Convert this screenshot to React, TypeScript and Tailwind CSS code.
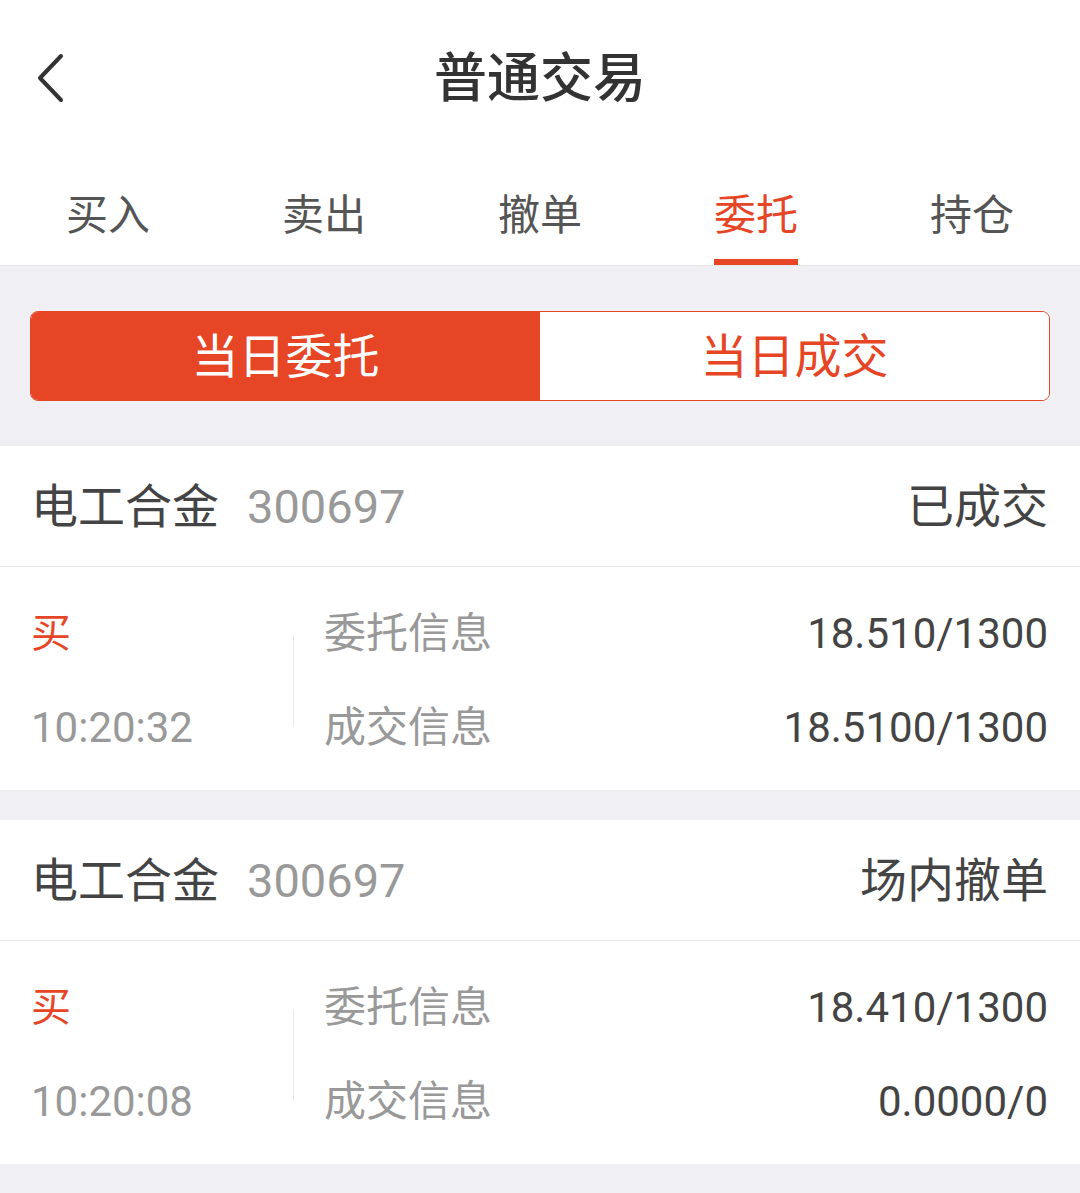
import { useState } from "react";

const FONT = "font-['Roboto','Noto_Sans_CJK_SC',sans-serif]";

interface Order {
  name: string;
  code: string;
  status: string;
  side: string;
  time: string;
  entrust: string;
  deal: string;
}

const orders: Order[] = [
  { name: "电工合金", code: "300697", status: "已成交", side: "买", time: "10:20:32", entrust: "18.510/1300", deal: "18.5100/1300" },
  { name: "电工合金", code: "300697", status: "场内撤单", side: "买", time: "10:20:08", entrust: "18.410/1300", deal: "0.0000/0" },
];

const tabs = ["买入", "卖出", "撤单", "委托", "持仓"];

export default function App() {
  const [tab, setTab] = useState(3);
  const [seg, setSeg] = useState(0);

  return (
    <div className={`w-[1080px] min-h-[1193px] bg-[#efeff4] ${FONT}`}>
      {/* Header */}
      <div className="relative h-[152px] bg-white flex items-center justify-center">
        <button className="absolute left-[30px] top-[50px] w-[40px] h-[56px] flex items-center justify-center">
          <svg width="30" height="50" viewBox="0 0 30 50" fill="none">
            <path d="M26 3 L5 25 L26 47" stroke="#333" strokeWidth="4" strokeLinecap="round" strokeLinejoin="round" />
          </svg>
        </button>
        <h1 className="text-[53px] leading-none text-[#333] mt-[6px] font-medium">普通交易</h1>
      </div>

      {/* Tabs */}
      <div className="h-[114px] bg-white flex border-b border-[#e8e8ec]">
        {tabs.map((t, i) => (
          <button key={t} onClick={() => setTab(i)} className="flex-1 relative flex items-center justify-center">
            <span className={`text-[42px] leading-none mt-[14px] ${i === tab ? "text-[#e64526]" : "text-[#555]"}`}>{t}</span>
            {i === tab && <span className="absolute bottom-0 left-1/2 -translate-x-1/2 w-[84px] h-[6px] bg-[#e64526]" />}
          </button>
        ))}
      </div>

      {/* Segmented control */}
      <div className="px-[30px] pt-[45px] pb-[45px]">
        <div className="flex h-[90px] rounded-[8px] border border-[#e64526] overflow-hidden">
          {["当日委托", "当日成交"].map((s, i) => (
            <button key={s} onClick={() => setSeg(i)}
              className={`flex-1 flex items-center justify-center text-[47px] leading-none ${seg === i ? "bg-[#e64526] text-white" : "bg-white text-[#e64526]"}`}>
              {s}
            </button>
          ))}
        </div>
      </div>

      {/* Orders */}
      <div className="flex flex-col gap-[30px]">
        {orders.map((o, i) => (
          <OrderCard key={i} order={o} />
        ))}
      </div>
    </div>
  );
}

function OrderCard({ order }: { order: Order }) {
  return (
    <div className="bg-white">
      <div className="h-[121px] flex items-center justify-between pl-[31px] pr-[32px] border-b border-[#e8e8e8]">
        <div className="flex items-baseline gap-[28px]">
          <span className="text-[47px] leading-none text-[#444]">{order.name}</span>
          <span className="text-[47px] leading-none text-[#999]">{order.code}</span>
        </div>
        <span className="text-[47px] leading-none text-[#444]">{order.status}</span>
      </div>
      <div className="flex items-center pl-[31px] pr-[32px] pt-[20px] pb-[15px]">
        <div className="w-[262px] flex flex-col">
          <div className="h-[94px] flex items-center text-[40px] leading-none text-[#e64526]">{order.side}</div>
          <div className="h-[94px] flex items-center text-[42px] leading-none text-[#999]">{order.time}</div>
        </div>
        <div className="w-px h-[90px] bg-[#e8e8e8]" />
        <div className="flex-1 flex flex-col pl-[30px]">
          <Row label="委托信息" value={order.entrust} />
          <Row label="成交信息" value={order.deal} />
        </div>
      </div>
    </div>
  );
}

function Row({ label, value }: { label: string; value: string }) {
  return (
    <div className="h-[94px] flex items-center justify-between">
      <span className="text-[42px] leading-none text-[#999]">{label}</span>
      <span className="text-[42px] leading-none text-[#444]">{value}</span>
    </div>
  );
}
